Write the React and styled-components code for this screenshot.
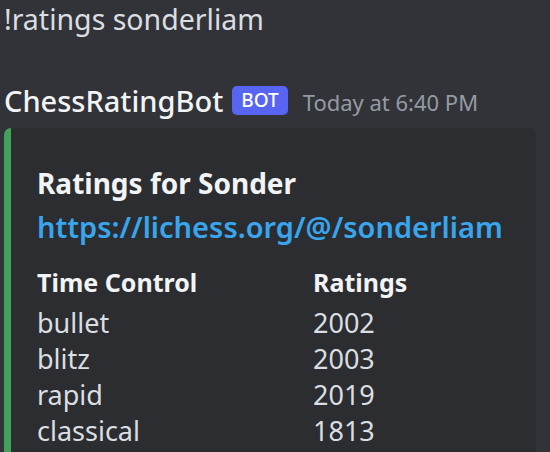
import React from 'react';
import styled, { createGlobalStyle } from 'styled-components';

const GlobalStyle = createGlobalStyle`
  body {
    margin: 0;
    background-color: #313338;
    font-family: "Noto Sans", "Open Sans", sans-serif;
    overflow: hidden;
  }
`;

const Page = styled.div`
  width: 550px;
  height: 452px;
  background-color: #313338;
  padding-left: 4px;
  box-sizing: border-box;
  overflow: hidden;
`;

const Command = styled.div`
  color: #dbdee1;
  font-size: 28.5px;
  line-height: 36px;
  padding-top: 1px;
`;

const Header = styled.div`
  display: flex;
  align-items: center;
  margin-top: 45px;
  height: 36px;
`;

const Username = styled.span`
  color: #f2f3f5;
  font-size: 29px;
  font-weight: 500;
`;

const Badge = styled.span`
  background-color: #5865f2;
  color: #ffffff;
  font-size: 19px;
  font-weight: 500;
  line-height: 29px;
  height: 29px;
  padding: 0 9px;
  border-radius: 5px;
  margin-left: 9px;
`;

const Timestamp = styled.span`
  color: #949ba4;
  font-size: 22px;
  margin-left: 15px;
  margin-top: 4px;
`;

const Embed = styled.div`
  margin-top: 10px;
  width: 532px;
  background-color: #2b2d31;
  border-left: 7px solid #43a25a;
  border-radius: 7px;
  padding: 37px 26px 20px 26px;
  box-sizing: border-box;
`;

const Title = styled.div`
  color: #f2f3f5;
  font-size: 28px;
  font-weight: 700;
  line-height: 36px;
`;

const LinkText = styled.a`
  display: block;
  margin-top: 5px;
  color: #38a5ec;
  font-size: 29px;
  font-weight: 600;
  line-height: 42px;
  text-decoration: none;
`;

const Fields = styled.div`
  display: grid;
  grid-template-columns: 276px 1fr;
  margin-top: 16px;
`;

const Field = styled.div`
  display: flex;
  flex-direction: column;
`;

const FieldName = styled.div`
  color: #f2f3f5;
  font-size: 25px;
  font-weight: 700;
  line-height: 36px;
  margin-bottom: 5px;
`;

const FieldValue = styled.div`
  color: #dbdee1;
  font-size: 27px;
  line-height: 36px;
`;

const rows = [
  ['bullet', '2002'],
  ['blitz', '2003'],
  ['rapid', '2019'],
  ['classical', '1813'],
];

export default function App() {
  return (
    <Page>
      <GlobalStyle />
      <Command>!ratings sonderliam</Command>
      <Header>
        <Username>ChessRatingBot</Username>
        <Badge>BOT</Badge>
        <Timestamp>Today at 6:40 PM</Timestamp>
      </Header>
      <Embed>
        <Title>Ratings for Sonder</Title>
        <LinkText href="#">https://lichess.org/@/sonderliam</LinkText>
        <Fields>
          <Field>
            <FieldName>Time Control</FieldName>
            {rows.map(([name]) => (
              <FieldValue key={name}>{name}</FieldValue>
            ))}
          </Field>
          <Field>
            <FieldName>Ratings</FieldName>
            {rows.map(([name, rating]) => (
              <FieldValue key={name}>{rating}</FieldValue>
            ))}
          </Field>
        </Fields>
      </Embed>
    </Page>
  );
}
